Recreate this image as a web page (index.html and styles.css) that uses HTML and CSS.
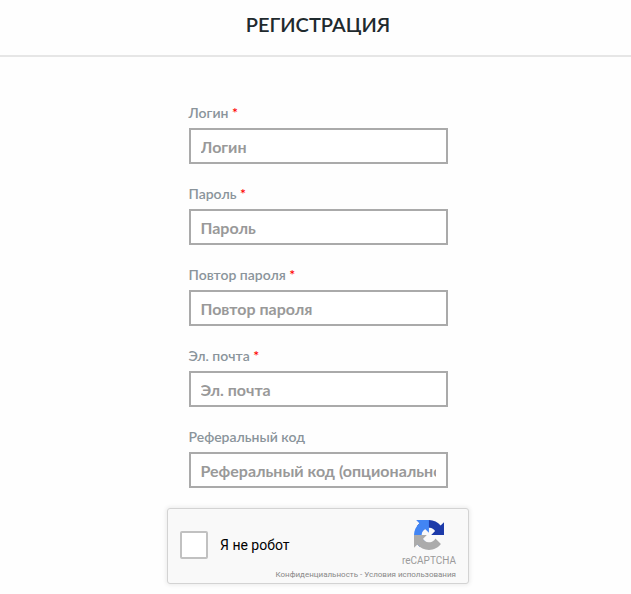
FILE: index.html
```html
<!DOCTYPE html>
<html lang="ru">
<head>
    <meta charset="utf-8">
    <title>Регистрация</title>
    <link rel="stylesheet" href="styles.css">
</head>
<body>
    <header class="page-header">
        <h1>РЕГИСТРАЦИЯ</h1>
    </header>
    <form class="register-form">
        <div class="field">
            <label for="login">Логин <span class="required">*</span></label>
            <input type="text" id="login" name="login" placeholder="Логин">
        </div>
        <div class="field">
            <label for="password">Пароль <span class="required">*</span></label>
            <input type="password" id="password" name="password" placeholder="Пароль">
        </div>
        <div class="field">
            <label for="password2">Повтор пароля <span class="required">*</span></label>
            <input type="password" id="password2" name="password2" placeholder="Повтор пароля">
        </div>
        <div class="field">
            <label for="email">Эл. почта <span class="required">*</span></label>
            <input type="email" id="email" name="email" placeholder="Эл. почта">
        </div>
        <div class="field">
            <label for="referral">Реферальный код</label>
            <input type="text" id="referral" name="referral" placeholder="Реферальный код (опционально)">
        </div>

        <div class="captcha">
            <div class="captcha-check">
                <input type="checkbox" id="robot" name="robot">
                <label for="robot">Я не робот</label>
            </div>
            <div class="captcha-brand">
                <svg class="captcha-logo" viewBox="0 0 64 64" aria-hidden="true">
                    <path fill="#1c3aa9" d="M64 31.955l-.033-1.37V4.687l-7.16 7.16C50.948 4.674 42.033.093 32.05.093c-10.4 0-19.622 4.96-25.458 12.64l11.736 11.86a15.55 15.55 0 0 1 4.754-5.334c2.05-1.6 4.952-2.906 8.968-2.906.485 0 .86.057 1.135.163 4.976.393 9.288 3.14 11.828 7.124l-8.307 8.307L64 31.953"/>
                    <path fill="#4285f4" d="M31.862.094l-1.37.033H4.594l7.16 7.16C4.58 13.147 0 22.06 0 32.046c0 10.4 4.96 19.622 12.64 25.458L24.5 45.768a15.55 15.55 0 0 1-5.334-4.754c-1.6-2.05-2.906-4.952-2.906-8.968 0-.485.057-.86.163-1.135.393-4.976 3.14-9.288 7.124-11.828l8.307 8.307L31.86.095"/>
                    <path fill="#ababab" d="M.001 32.045l.033 1.37v25.898l7.16-7.16c5.86 7.173 14.774 11.754 24.76 11.754 10.4 0 19.622-4.96 25.458-12.64l-11.736-11.86a15.55 15.55 0 0 1-4.754 5.334c-2.05 1.6-4.952 2.906-8.968 2.906-.485 0-.86-.057-1.135-.163-4.976-.393-9.288-3.14-11.828-7.124l8.307-8.307c-10.522.04-22.4.066-27.295-.005"/>
                </svg>
                <span class="captcha-name">reCAPTCHA</span>
            </div>
            <div class="captcha-links">
                <a href="#privacy">Конфиденциальность</a> - <a href="#terms">Условия использования</a>
            </div>
        </div>
    </form>
</body>
</html>
```

FILE: styles.css
```css
* {
    box-sizing: border-box;
}

body {
    margin: 0;
    background-color: #fefefe;
    font-family: Lato, "Open Sans", sans-serif;
}

.page-header {
    padding: 12px 0 18px 5px;
    border-bottom: 2px solid #e6e6e6;
    text-align: center;
}

h1 {
    margin: 0;
    font-size: 20px;
    line-height: 25px;
    font-weight: 600;
    color: #1f2a2e;
}

.register-form {
    display: flex;
    flex-direction: column;
    align-items: center;
    gap: 20px;
    padding: 46px 0 8px 5px;
}

.field {
    width: 259px;
    max-width: 100%;
}

.field label {
    display: block;
    margin-bottom: 5px;
    font-size: 14px;
    line-height: 20px;
    font-weight: 600;
    color: #8a949b;
}

.required {
    color: #ff0000;
}

.field input {
    display: block;
    width: 100%;
    height: 36px;
    padding: 1px 10px 0;
    border: 2px solid #aaa;
    border-radius: 0;
    background-color: #fff;
    font-family: inherit;
    font-size: 16px;
    font-weight: bold;
    color: #555;
}

.field input::placeholder {
    color: #999;
    opacity: 1;
}

.captcha {
    display: grid;
    grid-template-columns: 1fr auto;
    width: 302px;
    height: 76px;
    padding: 10px 12px 0;
    border: 1px solid #d3d3d3;
    border-radius: 3px;
    background-color: #f9f9f9;
    box-shadow: 0 0 4px 1px rgba(0, 0, 0, 0.08);
    font-family: Roboto, sans-serif;
}

.captcha-check {
    display: flex;
    align-items: center;
    gap: 12px;
    padding-top: 2px;
    font-size: 14px;
    color: #000;
}

.captcha-check input {
    appearance: none;
    width: 28px;
    height: 28px;
    margin: 0;
    border: 2px solid #c1c1c1;
    border-radius: 2px;
    background-color: #fff;
}

.captcha-brand {
    display: flex;
    flex-direction: column;
    align-items: center;
    padding-top: 1px;
    color: #9b9b9b;
}

.captcha-logo {
    width: 30px;
    height: 30px;
}

.captcha-name {
    margin-top: 5px;
    font-size: 10px;
    line-height: 12px;
}

.captcha-links {
    grid-column: 1 / -1;
    text-align: right;
    font-size: 8px;
    line-height: 12px;
    color: #888;
}

.captcha-links a {
    color: inherit;
    text-decoration: none;
}
```
